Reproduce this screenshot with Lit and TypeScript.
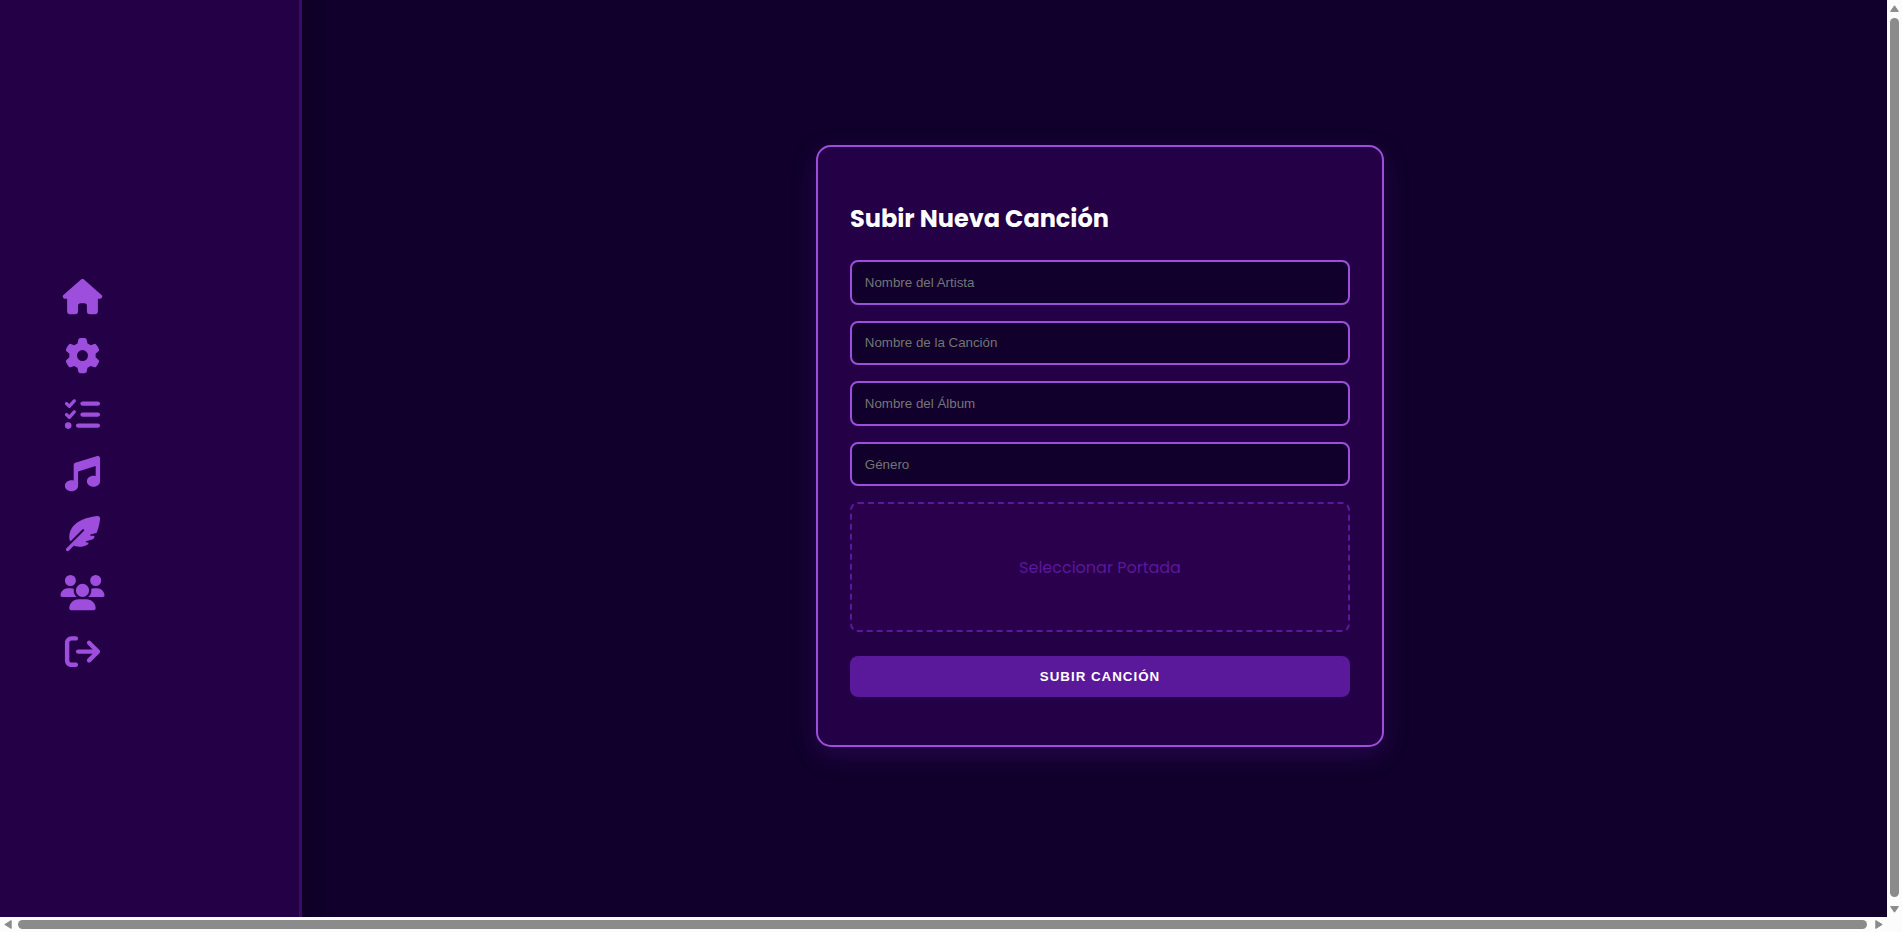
import { LitElement, html, css } from "lit";
import { customElement } from "lit/decorators.js";

interface NavIcon {
  label: string;
  width: number;
  path: string;
}

const NAV: NavIcon[] = [
  {
    label: "Inicio",
    width: 576,
    path: "M575.8 255.5c0 18-15 32.1-32 32.1l-32 0 .7 160.2c0 2.7-.2 5.4-.5 8.1l0 16.2c0 22.1-17.9 40-40 40l-16 0c-1.1 0-2.2 0-3.3-.1c-1.4 .1-2.8 .1-4.2 .1L416 512l-24 0c-22.1 0-40-17.9-40-40l0-24 0-64c0-17.7-14.3-32-32-32l-64 0c-17.7 0-32 14.3-32 32l0 64 0 24c0 22.1-17.9 40-40 40l-24 0-31.9 0c-1.5 0-3-.1-4.5-.2c-1.2 .1-2.4 .2-3.6 .2l-16 0c-22.1 0-40-17.9-40-40l0-112c0-.9 0-1.9 .1-2.8l0-69.7-32 0c-18 0-32-14-32-32.1c0-9 3-17 10-24L266.4 8c7-7 15-8 22-8s15 2 21 7L564.8 231.5c8 7 12 15 11 24z",
  },
  {
    label: "Ajustes",
    width: 512,
    path: "M495.9 166.6c3.2 8.7 .5 18.4-6.4 24.6l-43.3 39.4c1.1 8.3 1.7 16.8 1.7 25.4s-.6 17.1-1.7 25.4l43.3 39.4c6.9 6.2 9.6 15.9 6.4 24.6c-4.4 11.9-9.7 23.3-15.8 34.3l-4.7 8.1c-6.6 11-14 21.4-22.1 31.2c-5.9 7.2-15.7 9.6-24.5 6.8l-55.7-17.7c-13.4 10.3-28.2 18.9-44 25.4l-12.5 57.1c-2 9.1-9 16.3-18.2 17.8c-13.8 2.3-28 3.5-42.5 3.5s-28.7-1.2-42.5-3.5c-9.2-1.5-16.2-8.7-18.2-17.8l-12.5-57.1c-15.8-6.5-30.6-15.1-44-25.4L83.1 425.9c-8.8 2.8-18.6 .3-24.5-6.8c-8.1-9.8-15.5-20.2-22.1-31.2l-4.7-8.1c-6.1-11-11.4-22.4-15.8-34.3c-3.2-8.7-.5-18.4 6.4-24.6l43.3-39.4C64.6 273.1 64 264.6 64 256s.6-17.1 1.7-25.4L22.4 191.2c-6.9-6.2-9.6-15.9-6.4-24.6c4.4-11.9 9.7-23.3 15.8-34.3l4.7-8.1c6.6-11 14-21.4 22.1-31.2c5.9-7.2 15.7-9.6 24.5-6.8l55.7 17.7c13.4-10.3 28.2-18.9 44-25.4l12.5-57.1c2-9.1 9-16.3 18.2-17.8C227.3 1.2 241.5 0 256 0s28.7 1.2 42.5 3.5c9.2 1.5 16.2 8.7 18.2 17.8l12.5 57.1c15.8 6.5 30.6 15.1 44 25.4l55.7-17.7c8.8-2.8 18.6-.3 24.5 6.8c8.1 9.8 15.5 20.2 22.1 31.2l4.7 8.1c6.1 11 11.4 22.4 15.8 34.3zM256 336a80 80 0 1 0 0-160 80 80 0 1 0 0 160z",
  },
  {
    label: "Tareas",
    width: 512,
    path: "M152.1 38.2c9.9 8.9 10.7 24 1.8 33.9l-72 80c-4.4 4.9-10.6 7.8-17.2 7.9s-12.9-2.4-17.6-7L7 113C-2.3 103.6-2.3 88.4 7 79s24.6-9.4 33.9 0l22.1 22.1 55.1-61.2c8.9-9.9 24-10.7 33.9-1.8zm0 160c9.9 8.9 10.7 24 1.8 33.9l-72 80c-4.4 4.9-10.6 7.8-17.2 7.9s-12.9-2.4-17.6-7L7 273c-9.4-9.4-9.4-24.6 0-33.9s24.6-9.4 33.9 0l22.1 22.1 55.1-61.2c8.9-9.9 24-10.7 33.9-1.8zM224 96c0-17.7 14.3-32 32-32l224 0c17.7 0 32 14.3 32 32s-14.3 32-32 32l-224 0c-17.7 0-32-14.3-32-32zm0 160c0-17.7 14.3-32 32-32l224 0c17.7 0 32 14.3 32 32s-14.3 32-32 32l-224 0c-17.7 0-32-14.3-32-32zM160 416c0-17.7 14.3-32 32-32l288 0c17.7 0 32 14.3 32 32s-14.3 32-32 32l-288 0c-17.7 0-32-14.3-32-32zM48 368a48 48 0 1 1 0 96 48 48 0 1 1 0-96z",
  },
  {
    label: "Canciones",
    width: 512,
    path: "M499.1 6.3c8.1 6 12.9 15.6 12.9 25.7l0 72 0 264c0 44.2-43 80-96 80s-96-35.8-96-80s43-80 96-80c11.2 0 22 1.6 32 4.6L448 147 192 223.8 192 432c0 44.2-43 80-96 80s-96-35.8-96-80s43-80 96-80c11.2 0 22 1.6 32 4.6L128 200l0-72c0-14.1 9.3-26.6 22.8-30.7l320-96c9.7-2.9 20.2-1.1 28.3 5z",
  },
  {
    label: "Autores",
    width: 512,
    path: "M278.5 215.6L23 471c-9.4 9.4-9.4 24.6 0 33.9s24.6 9.4 33.9 0l74.8-74.8c7.4 4.6 15.3 8.2 23.8 10.5C200.3 452.8 270 454.5 338 409.4c12.2-8.1 5.8-25.4-8.8-25.4l-16.1 0c-5.1 0-9.2-4.1-9.2-9.2c0-4.1 2.7-7.6 6.5-8.8l97.7-29.3c3.4-1 6.4-3.1 8.4-6.1c4.4-6.4 8.6-12.9 12.6-19.6c6.2-10.3-1.5-23-13.5-23l-38.6 0c-5.1 0-9.2-4.1-9.2-9.2c0-4.1 2.7-7.6 6.5-8.8l80.9-24.3c4.6-1.4 8.4-4.8 10.2-9.3C494.5 163 507.8 86.1 511.9 36.8c.8-9.9-3-19.6-10-26.6s-16.7-10.8-26.6-10C391.5 7 228.5 40.5 137.4 131.6C57.3 211.7 56.7 302.3 71.3 356.4c2.1 7.9 12 9.6 17.8 3.8L253.6 195.8c6.2-6.2 16.4-6.2 22.6 0c5.4 5.4 6.1 13.6 2.2 19.8z",
  },
  {
    label: "Usuarios",
    width: 640,
    path: "M144 0a80 80 0 1 1 0 160A80 80 0 1 1 144 0zM512 0a80 80 0 1 1 0 160A80 80 0 1 1 512 0zM0 298.7C0 239.8 47.8 192 106.7 192l42.7 0c15.9 0 31 3.5 44.6 9.7c-1.3 7.2-1.9 14.7-1.9 22.3c0 38.2 16.8 72.5 43.3 96c-.2 0-.4 0-.7 0L21.3 320C9.6 320 0 310.4 0 298.7zM405.3 320c-.2 0-.4 0-.7 0c26.6-23.5 43.3-57.8 43.3-96c0-7.6-.7-15-1.9-22.3c13.6-6.3 28.7-9.7 44.6-9.7l42.7 0C592.2 192 640 239.8 640 298.7c0 11.8-9.6 21.3-21.3 21.3l-213.3 0zM224 224a96 96 0 1 1 192 0 96 96 0 1 1 -192 0zM128 485.3C128 411.7 187.7 352 261.3 352l117.3 0C452.3 352 512 411.7 512 485.3c0 14.7-11.9 26.7-26.7 26.7l-330.7 0c-14.7 0-26.7-11.9-26.7-26.7z",
  },
  {
    label: "Salir",
    width: 512,
    path: "M502.6 278.6c12.5-12.5 12.5-32.8 0-45.3l-128-128c-12.5-12.5-32.8-12.5-45.3 0s-12.5 32.8 0 45.3L402.7 224 192 224c-17.7 0-32 14.3-32 32s14.3 32 32 32l210.7 0-73.4 73.4c-12.5 12.5-12.5 32.8 0 45.3s32.8 12.5 45.3 0l128-128zM160 96c17.7 0 32-14.3 32-32s-14.3-32-32-32L96 32C43 32 0 75 0 128L0 384c0 53 43 96 96 96l64 0c17.7 0 32-14.3 32-32s-14.3-32-32-32l-64 0c-17.7 0-32-14.3-32-32l0-256c0-17.7 14.3-32 32-32l64 0z",
  },
];

const FIELDS = ["Nombre del Artista", "Nombre de la Canción", "Nombre del Álbum", "Género"];

@customElement("side-nav")
class SideNav extends LitElement {
  static styles = css`
    :host {
      display: block;
      box-sizing: border-box;
      width: 302px;
      padding: 278.8px 0 0 60px;
      background: #240046;
      border-right: 3px solid #3c096c;
      box-shadow: 4px 0 20px rgba(0, 0, 0, 0.2);
    }
    .list {
      display: flex;
      flex-direction: column;
      gap: 24px;
      width: 45px;
    }
    .icon {
      display: block;
      width: 45px;
      height: 35.2px;
      fill: #9d4edd;
      overflow: visible;
    }
  `;

  render() {
    return html`<nav class="list">
      ${NAV.map(
        (n) => html`<svg class="icon" viewBox="0 0 ${n.width} 512" aria-label=${n.label}>
          <path d=${n.path}></path>
        </svg>`
      )}
    </nav>`;
  }
}

@customElement("song-form")
class SongForm extends LitElement {
  static styles = css`
    :host {
      display: block;
      box-sizing: border-box;
      width: 568px;
      height: 602px;
      padding: 54px 32px 0;
      border: 2px solid #9d4edd;
      border-radius: 15px;
      background: #240046;
      box-shadow: 0 8px 25px rgba(90, 24, 154, 0.3);
    }
    .title {
      margin: 0 0 23px;
      font: 700 24px/36px Poppins, Inter, sans-serif;
      color: #fff;
      white-space: nowrap;
    }
    .fields {
      display: flex;
      flex-direction: column;
      gap: 16px;
    }
    .field {
      box-sizing: border-box;
      width: 100%;
      height: 44.6px;
      margin: 0;
      padding: 12.8px;
      border: 2px solid #9d4edd;
      border-radius: 8px;
      background: #10002b;
      color: #fff;
      font: 13.333px "Liberation Sans", Arial, sans-serif;
      outline: none;
    }
    .field::placeholder {
      color: #757575;
      opacity: 1;
    }
    .drop {
      box-sizing: border-box;
      display: flex;
      align-items: center;
      justify-content: center;
      height: 129.6px;
      padding-top: 1px;
      border: 2px dashed #5a189a;
      border-radius: 8px;
      background: rgba(60, 0, 100, 0.25);
      color: #5a189a;
      font: 400 16px/24px Poppins, Inter, sans-serif;
    }
    .submit {
      display: block;
      width: 100%;
      height: 40.6px;
      margin: 24px 0 0;
      padding: 0;
      border: 0;
      border-radius: 8px;
      background: #5a189a;
      color: #fff;
      font: 700 13.333px "Liberation Sans", Arial, sans-serif;
      letter-spacing: 1px;
    }
  `;

  render() {
    return html`
      <h2 class="title">Subir Nueva Canción</h2>
      <div class="fields">
        ${FIELDS.map((f) => html`<input class="field" type="text" placeholder=${f} />`)}
        <div class="drop">Seleccionar Portada</div>
      </div>
      <button class="submit">SUBIR CANCIÓN</button>
    `;
  }
}

@customElement("app-root")
class AppRoot extends LitElement {
  static styles = css`
    :host {
      display: grid;
      grid-template-columns: 1fr 15px;
      grid-template-rows: 1fr 15px;
      width: 100vw;
      height: 100vh;
      overflow: hidden;
      background: #fcfcfc;
    }
    .page {
      display: flex;
      min-width: 0;
      min-height: 0;
      overflow: hidden;
      background: #10002b;
    }
    .nav {
      flex: none;
    }
    .main {
      flex: 1;
      padding: 145px 0 0 514px;
    }
    .bar {
      display: flex;
      align-items: center;
      justify-content: space-between;
      box-sizing: border-box;
    }
    .bar.v {
      flex-direction: column;
      padding: 5px 0 4px;
    }
    .bar.h {
      padding: 0 4px;
    }
    .thumb {
      flex: 1;
      border-radius: 5px;
      background: #8b8b8b;
    }
    .v .thumb {
      width: 9px;
      margin: 6px 0 9px;
    }
    .h .thumb {
      height: 9px;
      margin: 0 8px 0 6px;
    }
    .arrow {
      display: block;
      fill: #8b8b8b;
      stroke: #8b8b8b;
      stroke-linejoin: round;
    }
  `;

  private arrow(w: number, h: number, d: string) {
    return html`<svg class="arrow" width=${w} height=${h} viewBox="0 0 ${w} ${h}"><path d=${d}></path></svg>`;
  }

  render() {
    return html`
      <div class="page">
        <side-nav class="nav"></side-nav>
        <main class="main"><song-form></song-form></main>
      </div>
      <div class="bar v">
        ${this.arrow(9, 7, "M4.5 .8L8.4 6.4H.6z")}
        <div class="thumb"></div>
        ${this.arrow(9, 7, "M4.5 6.2L8.4 .6H.6z")}
      </div>
      <div class="bar h">
        ${this.arrow(8, 9, "M.8 4.5L7.2 .6V8.4z")}
        <div class="thumb"></div>
        ${this.arrow(8, 9, "M7.2 4.5L.8 .6V8.4z")}
      </div>
    `;
  }
}
